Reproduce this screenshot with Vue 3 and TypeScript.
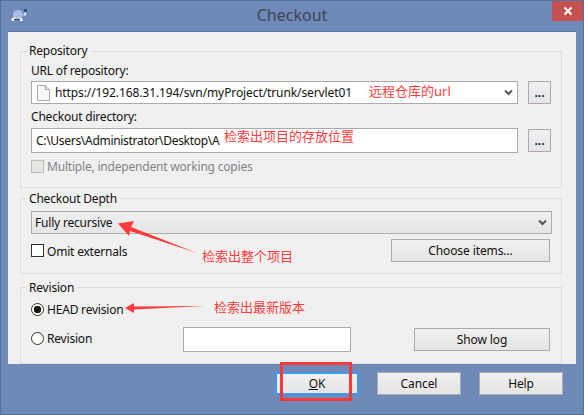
<script setup lang="ts">
const url = "https://192.168.31.194/svn/myProject/trunk/servlet01";
const dir = "C:\\Users\\Administrator\\Desktop\\A";
</script>

<template>
  <div class="win">
    <div class="title">
      <svg class="title__icon" width="18" height="14" viewBox="0 0 18 14">
        <ellipse cx="8" cy="6.500" rx="5" ry="4.500" fill="#a9bdea" />
        <path d="M13 7l2-3 1.500.5-1 3.500z" fill="#dfe5ef" />
        <rect x="14" y="1" width="3" height="3" fill="#24507f" />
        <path d="M1 11l3-2 2 1-2 3H2zM9 10h3l1 3h-3z" fill="#f1f3f7" />
        <path d="M4 11h6v1H4z" fill="#39435a" />
      </svg>
      <span class="title__text">Checkout</span>
      <span class="title__close">
        <svg width="10" height="10" viewBox="0 0 10 10">
          <path d="M1.500 1.500l7 7M8.500 1.500l-7 7" stroke="#fff" stroke-width="2" />
        </svg>
      </span>
    </div>

    <div class="panel">
      <section class="group group--repo">
        <span class="group__title group__title--repo">Repository</span>
        <div class="lbl lbl--url">URL of repository:</div>
        <div class="row">
          <div class="field field--combo">
            <svg class="doc" width="13" height="16" viewBox="0 0 13 16">
              <path d="M.5.5h8l4 4v11H.5z" fill="#f7f7f7" stroke="#a8a8a8" />
              <path d="M8.500.5v4h4" fill="#e4e4e4" stroke="#a8a8a8" />
            </svg>
            <span class="field__text field__text--url">{{ url }}</span>
            <svg class="chev" width="9" height="7" viewBox="0 0 9 7">
              <path d="M1 1.500l3.500 3.500 3.500-3.500" fill="none" stroke="#555" stroke-width="2" />
            </svg>
          </div>
          <button class="btn btn--dots" type="button">...</button>
        </div>
        <div class="lbl lbl--dir">Checkout directory:</div>
        <div class="row">
          <div class="field field--dir"><span class="field__text field__text--dir">{{ dir }}</span></div>
          <button class="btn btn--dots" type="button">...</button>
        </div>
        <div class="check check--off">
          <span class="box box--off"></span>
          <span>Multiple, independent working copies</span>
        </div>
      </section>

      <section class="group group--depth">
        <span class="group__title">Checkout Depth</span>
        <div class="select">
          <span>Fully recursive</span>
          <svg class="chev" width="9" height="7" viewBox="0 0 9 7">
            <path d="M1 1.500l3.500 3.500 3.500-3.500" fill="none" stroke="#555" stroke-width="2" />
          </svg>
        </div>
        <div class="depth-row">
          <div class="check check--omit">
            <span class="box"></span>
            <span>Omit externals</span>
          </div>
          <button class="btn btn--choose" type="button">Choose items...</button>
        </div>
      </section>

      <section class="group group--rev">
        <span class="group__title">Revision</span>
        <div class="check">
          <span class="radio radio--on"></span>
          <span>HEAD revision</span>
        </div>
        <div class="rev-row">
          <div class="check check--rev">
            <span class="radio"></span>
            <span>Revision</span>
          </div>
          <div class="field field--rev"></div>
          <button class="btn btn--log" type="button">Show log</button>
        </div>
      </section>
    </div>

    <div class="footer">
      <button class="btn btn--foot btn--default" type="button"><u>O</u>K</button>
      <button class="btn btn--foot" type="button">Cancel</button>
      <button class="btn btn--foot" type="button">Help</button>
    </div>

    <span class="note note--url">远程仓库的url</span>
    <span class="note note--dir">检索出项目的存放位置</span>
    <span class="note note--depth">检索出整个项目</span>
    <span class="note note--head">检索出最新版本</span>
    <svg class="arrows" width="584" height="415" viewBox="0 0 584 415">
      <path d="M118 223.500L134 221L131 227L197 253L130 231L129 236z" fill="#ff3b3b" />
      <path d="M125 308L134 303L134 306.500L205 306L134 309.500L134 313z" fill="#ff3b3b" />
    </svg>
    <div class="mark"></div>
  </div>
</template>

<style>
html,
body {
  margin: 0;
  background: #6f89b9;
}
</style>

<style scoped>
.win {
  position: relative;
  box-sizing: border-box;
  width: 584px;
  height: 415px;
  display: flex;
  flex-direction: column;
  padding: 0 7px;
  background: #6f89b9;
  border: 1px solid #56709f;
  font-family: "Noto Sans", "Noto Sans CJK SC", sans-serif;
  font-size: 12px;
  letter-spacing: -0.2px;
  line-height: 15px;
  color: #111;
  overflow: hidden;
}

.title {
  height: 30px;
  flex: none;
  display: flex;
  align-items: center;
  justify-content: center;
  position: relative;
}

.title__icon {
  position: absolute;
  left: 2px;
  top: 7px;
}

.title__text {
  font-size: 16px;
  letter-spacing: 0;
  color: #3f4654;
  margin-top: -1px;
}

.title__close {
  position: absolute;
  right: -7px;
  top: 0;
  width: 31px;
  height: 20px;
  background: #c75050;
  display: flex;
  align-items: center;
  justify-content: center;
}

.panel {
  flex: none;
  height: 333px;
  box-sizing: border-box;
  padding: 19px 14px 0 12px;
  background: #f0f0f0;
  border-top: 1px solid #5d77a8;
  display: flex;
  flex-direction: column;
  gap: 10px;
}

.group {
  position: relative;
  box-sizing: border-box;
  border: 1px solid #dcdcdc;
  padding: 12px 9px 0 10px;
}

.group--repo {
  height: 137px;
}

.group--depth {
  height: 77px;
}

.group--rev {
  height: 77px;
  margin-top: 3px;
  padding-top: 14px;
}

.group__title {
  position: absolute;
  left: 5px;
  top: -8px;
  padding: 0 3px;
  background: #f0f0f0;
}

.group__title--repo {
  top: -9px;
}

.lbl {
  height: 15px;
}

.lbl--url {
  margin-top: -1px;
  margin-bottom: 3px;
}

.lbl--dir {
  margin-top: 5px;
  margin-bottom: 4px;
}

.row {
  display: flex;
  align-items: center;
  justify-content: space-between;
  padding-right: 1px;
}

.field {
  box-sizing: border-box;
  display: flex;
  align-items: center;
  background: #fff;
  border: 1px solid #ababab;
}

.field--combo {
  width: 487px;
  height: 23px;
  padding: 0 4px 0 5px;
}

.field--dir {
  width: 487px;
  height: 25px;
  padding: 0 4px;
}

.field--rev {
  width: 168px;
  height: 25px;
}

.field__text {
  flex: 1;
  white-space: nowrap;
}

.field__text--url {
  letter-spacing: -0.1px;
}

.field__text--dir {
  letter-spacing: -0.3px;
}

.doc {
  margin-right: 5px;
}

.chev {
  flex: none;
}

.btn {
  box-sizing: border-box;
  height: 23px;
  padding: 0;
  border: 1px solid #acacac;
  background: linear-gradient(#f0f0f0, #e5e5e5);
  font: inherit;
  letter-spacing: -0.1px;
  color: #111;
}

.btn--dots {
  width: 23px;
  font-weight: 700;
  letter-spacing: 0;
  color: #1b2a4a;
}

.btn--choose {
  width: 159px;
  margin-right: 2px;
}

.btn--log {
  width: 136px;
  margin-left: 63px;
}

.btn--foot {
  width: 84px;
}

.btn--default {
  border: 2px solid #3c9bf0;
}

.check {
  display: flex;
  align-items: center;
  gap: 3px;
  height: 15px;
}

.check--off {
  margin-top: 6px;
  color: #838383;
}

.check--omit span:last-child {
  margin-top: 3px;
}

.box {
  box-sizing: border-box;
  width: 13px;
  height: 13px;
  background: #fff;
  border: 1px solid #333;
}

.box--off {
  background: #e6e6e6;
  border-color: #bcbcbc;
}

.radio {
  box-sizing: border-box;
  width: 13px;
  height: 13px;
  border-radius: 50%;
  background: #fff;
  border: 1px solid #333;
}

.radio--on {
  background: radial-gradient(circle, #1a1a1a 3.500px, #fff 4px);
}

.select {
  box-sizing: border-box;
  height: 23px;
  display: flex;
  align-items: center;
  justify-content: space-between;
  padding: 0 4px 0 3px;
  border: 1px solid #acacac;
  background: linear-gradient(#f0f0f0, #e5e5e5);
}

.depth-row {
  display: flex;
  align-items: center;
  justify-content: space-between;
  margin-top: 5px;
}

.rev-row {
  display: flex;
  align-items: center;
  margin-top: 10px;
}

.check--rev {
  width: 152px;
  margin-top: -2px;
}

.footer {
  flex: 1;
  display: flex;
  justify-content: flex-end;
  gap: 18px;
  padding: 8px 13px 0 0;
}

.note {
  position: absolute;
  color: #ff3b3b;
  font-size: 13px;
  letter-spacing: 0;
  line-height: 16px;
  white-space: nowrap;
}

.note--url {
  left: 368px;
  top: 82px;
}

.note--dir {
  left: 223px;
  top: 127px;
}

.note--depth {
  left: 201px;
  top: 247px;
}

.note--head {
  left: 213px;
  top: 298px;
}

.arrows {
  position: absolute;
  left: -1px;
  top: -1px;
  pointer-events: none;
}

.mark {
  position: absolute;
  left: 279px;
  top: 361px;
  width: 72px;
  height: 39px;
  box-sizing: border-box;
  border: 3px solid #f93a3a;
}
</style>
